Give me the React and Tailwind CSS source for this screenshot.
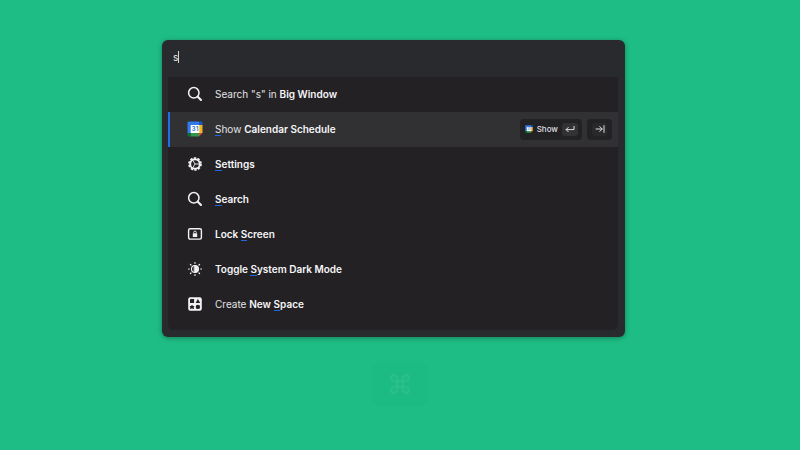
import React from "react";

function SearchIcon() {
  return (
    <svg viewBox="0 0 16 16" className="size-4" fill="none" stroke="currentColor" strokeLinecap="round" aria-hidden="true">
      <circle cx="6.8" cy="6.8" r="5.2" strokeWidth="1.5" />
      <path d="M10.8 10.8 L14 14" strokeWidth="2.1" />
    </svg>
  );
}

function CalendarIcon({ className }) {
  return (
    <svg viewBox="0 0 16 16" className={className} aria-hidden="true">
      <path d="M1.5 0.5H12V4H4V12H0.5V1.5Q0.5 0.5 1.5 0.5Z" fill="#3478ea" />
      <path d="M12 0.5H14.5Q15.5 0.5 15.5 1.5V4H12Z" fill="#1b55c4" />
      <path d="M12 4H15.5V12H12Z" fill="#f5b51f" />
      <path d="M0.5 12H4V15.5H1.5Q0.5 15.5 0.5 14.5Z" fill="#176b36" />
      <path d="M4 12H12V15.5H4Z" fill="#309a4c" />
      <path d="M12 12H15.5L12 15.5Z" fill="#dc4537" />
      <path d="M3.7 4H12.3V12H3.7Z" fill="#fff" />
      <text x="8" y="10.4" textAnchor="middle" fontSize="6.5" fontWeight="600" fill="#3474d4">31</text>
    </svg>
  );
}

function GearIcon() {
  return (
    <svg viewBox="0 0 16 16" className="size-4" fill="none" stroke="currentColor" aria-hidden="true">
      <circle cx="8" cy="8" r="4.8" strokeWidth="1.9" />
      <circle cx="8" cy="8" r="6" strokeWidth="1.7" strokeDasharray="2.3 1.47" />
      <path d="M8 8H12.5M8 8L5.7 4.1M8 8L5.7 11.9" strokeWidth="0.9" />
    </svg>
  );
}

function LockScreenIcon() {
  return (
    <svg viewBox="0 0 16 16" className="size-4" fill="none" stroke="currentColor" aria-hidden="true">
      <rect x="1.6" y="2.7" width="12.8" height="10.4" rx="1.5" strokeWidth="1.4" />
      <rect x="5.8" y="7.3" width="4.4" height="3.6" rx="0.5" fill="currentColor" stroke="none" />
      <path d="M6.7 7.4V6.4a1.3 1.3 0 0 1 2.6 0V7.4" strokeWidth="0.9" />
    </svg>
  );
}

function DarkModeIcon() {
  return (
    <svg viewBox="0 0 16 16" className="size-4" fill="none" stroke="currentColor" strokeLinecap="round" aria-hidden="true">
      <circle cx="8" cy="8" r="3.5" strokeWidth="1.1" />
      <path d="M7.6 4.6a3.4 3.4 0 0 1 0 6.8Z" fill="currentColor" />
      <path d="M8 1.5v.8M8 13.7v.8M1.5 8h.8M13.7 8h.8M3.4 3.4l.6.6M12 12l.6.6M3.4 12.6l.6-.6M12 4l.6-.6" strokeWidth="1.2" />
    </svg>
  );
}

function SpaceIcon() {
  return (
    <svg viewBox="0 0 16 16" className="size-4" aria-hidden="true">
      <rect x="1.2" y="1.2" width="13.6" height="13.6" rx="2" fill="currentColor" />
      <g fill="#232124">
        <rect x="3" y="3.1" width="4.1" height="4" rx="0.4" />
        <path d="M10.9 2.9L13.2 7.1H8.6Z" />
        <path d="M5 8.7L6 9.9L7.4 10L6.7 11.3L7.1 12.9L5 12.4L2.9 12.9L3.3 11.3L2.6 10L4 9.9Z" />
        <circle cx="10.9" cy="10.9" r="2.2" />
      </g>
    </svg>
  );
}

function ReturnIcon() {
  return (
    <svg viewBox="0 0 10 10" className="size-[10px]" fill="none" stroke="currentColor" strokeLinecap="round" strokeLinejoin="round" aria-hidden="true">
      <path d="M9 2.4V5.6H1.2M3.3 3.4L1.1 5.6L3.3 7.8" />
    </svg>
  );
}

function TabIcon() {
  return (
    <svg viewBox="0 0 10 10" className="size-[10px]" fill="none" stroke="currentColor" strokeLinecap="round" strokeLinejoin="round" aria-hidden="true">
      <path d="M1 5H7M4.8 2.6L7.2 5L4.8 7.4M9 1.6V8.4" />
    </svg>
  );
}

function Match({ children }) {
  return <span className="border-b border-[#1c68e0]">{children}</span>;
}

function Strong({ children }) {
  return <b className="font-semibold text-[#f6f6f7]">{children}</b>;
}

const commands = [
  { id: "web", icon: <SearchIcon />, label: <>Search "s" in <Strong>Big Window</Strong></> },
  { id: "calendar", icon: <CalendarIcon className="size-4" />, label: <><Match>S</Match>how <Strong>Calendar Schedule</Strong></>, selected: true },
  { id: "settings", icon: <GearIcon />, label: <Strong><Match>S</Match>ettings</Strong> },
  { id: "search", icon: <SearchIcon />, label: <Strong><Match>S</Match>earch</Strong> },
  { id: "lock", icon: <LockScreenIcon />, label: <Strong>Lock <Match>S</Match>creen</Strong> },
  { id: "dark", icon: <DarkModeIcon />, label: <Strong>Toggle <Match>S</Match>ystem Dark Mode</Strong> },
  { id: "space", icon: <SpaceIcon />, label: <>Create <Strong>New <Match>S</Match>pace</Strong></> },
];

function CommandRow({ icon, label, selected }) {
  return (
    <li
      className={
        selected
          ? "flex h-[35px] items-center border-l-2 border-[#1d6fe8] bg-[#313032] pr-[6px] pb-px pl-[17px]"
          : "flex h-[35px] items-center border-l-2 border-transparent pr-[6px] pb-px pl-[17px]"
      }
    >
      <button type="button" className="flex h-full grow items-center gap-3 text-left text-[#e3e3e5]">
        <span className="text-[#f2f2f3]">{icon}</span>
        <span className="leading-4">{label}</span>
      </button>
      {selected && (
        <div className="flex gap-[5px] text-[#dedee0]">
          <button type="button" className="flex h-[21px] items-center rounded bg-[#222124] pr-1 pl-[5px] text-[8px] leading-3 font-medium">
            <CalendarIcon className="size-2" />
            <span className="mx-1">Show</span>
            <span className="flex h-[13px] w-4 items-center justify-center rounded-[3px] bg-[#323134]">
              <ReturnIcon />
            </span>
          </button>
          <button type="button" aria-label="More actions" className="flex h-[21px] w-[25px] items-center justify-center rounded bg-[#222124]">
            <span className="flex h-[13px] w-[15px] items-center justify-center rounded-[3px] bg-[#29292c]">
              <TabIcon />
            </span>
          </button>
        </div>
      )}
    </li>
  );
}

export default function App() {
  return (
    <main className="flex min-h-screen flex-col items-center bg-[#1ebd85] pt-10 font-['Inter',sans-serif] text-[10px]">
      <div className="w-full max-w-[476px] pr-[13px]">
        <section className="rounded-md bg-[#282a2e] pr-[7px] pb-[7px] pl-[6px] shadow-[0_1px_5px_rgba(0,0,0,0.35)]">
          <div className="flex h-[37px] items-center px-[5px] pb-[3px]">
            <input
              type="text"
              aria-label="Command"
              defaultValue="s"
              className="field-sizing-content bg-transparent leading-4 text-[#e8e8ea] outline-none"
            />
            <span className="h-3 w-px bg-[#d5d5d7]" />
          </div>
          <ul className="rounded-b-md bg-[#232124] pb-2">
            {commands.map((command) => (
              <CommandRow key={command.id} icon={command.icon} label={command.label} selected={command.selected} />
            ))}
          </ul>
        </section>
      </div>
      <div className="mt-6 flex h-[45px] w-14 items-center justify-center rounded-lg bg-[#1dbb84] text-[#2abf8a]">
        <svg viewBox="0 0 24 24" className="size-6" fill="none" stroke="currentColor" strokeWidth="2.6" aria-hidden="true">
          <path d="M9 6v12a3 3 0 1 1-3-3h12a3 3 0 1 1-3 3V6a3 3 0 1 1 3 3H6a3 3 0 1 1 3-3" />
        </svg>
      </div>
    </main>
  );
}
